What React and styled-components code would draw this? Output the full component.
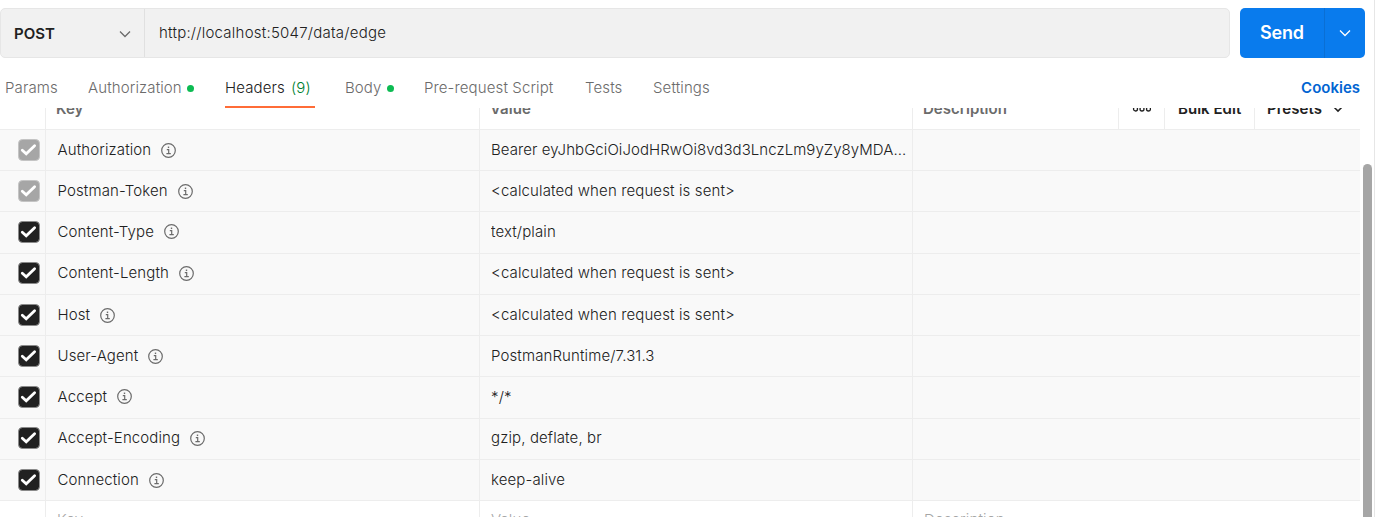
import React from "react";
import styled, { createGlobalStyle } from "styled-components";

const Global = createGlobalStyle`
  * { box-sizing: border-box; }
  body { margin: 0; background: #fff; overflow: hidden; }
`;

const Page = styled.div`
  width: 1375px;
  height: 517px;
  overflow: hidden;
  display: flex;
  flex-direction: column;
  border-right: 1px solid #e6e6e6;
  font: 350 15px/20px Inter, sans-serif;
  letter-spacing: 0.12px;
  color: #212121;
  white-space: nowrap;
`;

const UrlBar = styled.div`
  display: flex;
  gap: 10px;
  padding: 8px 9px 0 0;
`;

const UrlField = styled.div`
  flex: 1;
  display: flex;
  height: 50px;
  background: #f1f1f1;
  border: 1px solid #e6e6e6;
  border-radius: 5px;
`;

const Method = styled.div`
  width: 144px;
  display: flex;
  align-items: center;
  justify-content: space-between;
  padding: 2px 13px 0 13px;
  border-right: 1px solid #e0e0e0;
  font-weight: 600;
  letter-spacing: 0;
`;

const Url = styled.div`
  display: flex;
  align-items: center;
  padding-left: 14px;
  letter-spacing: 0.23px;
`;

const SendButton = styled.div`
  width: 125px;
  height: 50px;
  display: flex;
  border-radius: 5px;
  overflow: hidden;
  background: #097bed;
  color: #fff;
`;

const SendLabel = styled.div`
  width: 85px;
  display: flex;
  align-items: center;
  justify-content: center;
  border-right: 1px solid #0a6fd4;
  font-size: 18px;
  font-weight: 600;
  letter-spacing: -0.2px;
`;

const SendMenu = styled.div`
  flex: 1;
  display: flex;
  align-items: center;
  justify-content: center;
`;

const Tabs = styled.div`
  height: 50px;
  flex: none;
  display: flex;
  padding: 10px 14px 0 5px;
`;

const Tab = styled.div`
  width: ${(p) => p.$w}px;
  height: 40px;
  padding-top: 2px;
  margin-right: ${(p) => p.$gap}px;
  display: flex;
  align-items: center;
  color: ${(p) => (p.$active ? "#212121" : "#6b6b6b")};
  border-bottom: 2px solid ${(p) => (p.$active ? "#ff6c37" : "transparent")};
`;

const Count = styled.span`
  margin-left: 6px;
  color: #007f31;
`;

const Dot = styled.span`
  width: 7px;
  height: 7px;
  margin: 1px 0 0 5px;
  border-radius: 50%;
  background: #0cbb52;
`;

const Cookies = styled.div`
  margin-left: auto;
  height: 40px;
  display: flex;
  align-items: center;
  color: #0265d2;
  font-weight: 600;
  letter-spacing: 0;
`;

const Scroller = styled.div`
  flex: 1;
  min-height: 0;
  overflow: hidden;
  display: flex;
`;

const Table = styled.div`
  width: 1360px;
  margin-top: -20px;
`;

const Row = styled.div`
  display: grid;
  grid-template-columns: 46px 434px 433px 1fr;
  height: ${(p) => p.$h || 41}px;
  border-bottom: 1px solid #ededed;
  background: ${(p) => (p.$plain ? "#fff" : "#f9f9f9")};
`;

const HeadRow = styled(Row)`
  grid-template-columns: 46px 434px 433px 206px 46px 90px 1fr;
  height: 42px;
  background: #fff;
`;

const Cell = styled.div`
  display: flex;
  align-items: center;
  min-width: 0;
  padding: 0 0 ${(p) => p.$lift || 0}px 11px;
  border-right: 1px solid #ededed;
  color: ${(p) => (p.$faint ? "#a6a6a6" : "inherit")};
  &:last-child { border-right: 0; }
`;

const HeadCell = styled(Cell)`
  padding: 0 0 0 ${(p) => (p.$pad ?? 10)}px;
  color: ${(p) => (p.$action ? "#212121" : "#6b6b6b")};
  font-weight: 600;
  letter-spacing: 0.03px;
  gap: 11px;
`;

const CheckCell = styled(Cell)`
  padding-left: 18px;
`;

const KeyCell = styled(Cell)`
  padding-left: 11.5px;
  gap: 10px;
`;

const Value = styled.span`
  overflow: hidden;
  text-overflow: ellipsis;
  letter-spacing: ${(p) => (p.$tight ? 0.06 : 0.12)}px;
`;

const Scrollbar = styled.div`
  width: 9px;
  margin: 56px 0 0 3px;
  background: #a6a6a6;
  border-radius: 5px 5px 0 0;
`;

const Chevron = ({ color, size = 12, width = 1.3 }) => (
  <svg width={size} height={size} viewBox="0 0 12 12" fill="none" stroke={color} strokeWidth={width}>
    <path d="M1 3.5 6 8.5 11 3.5" />
  </svg>
);

const Check = ({ muted }) => (
  <svg width="22" height="22" viewBox="0 0 22 22" fill="none">
    <rect x="0.5" y="0.5" width="21" height="21" rx="4" fill={muted ? "#a6a6a6" : "#212121"} stroke={muted ? "#c4c4c4" : "#8a8a8a"} />
    <path d="M4.3 11.3 8.2 14.8 16.6 6.8" stroke="#fff" strokeWidth="2.8" strokeLinecap="round" />
  </svg>
);

const Info = () => (
  <svg width="15" height="15" viewBox="0 0 15 15" fill="none" stroke="#6b6b6b" strokeWidth="1.2">
    <circle cx="7.5" cy="7.5" r="6.8" />
    <path d="M5.8 6.6H7.7V10.7M5.4 10.7H9.8" />
    <path d="M6.8 4.3H8.2" strokeWidth="1.5" />
  </svg>
);

const More = () => (
  <svg width="19" height="6" viewBox="0 0 19 6" fill="none" stroke="#212121" strokeWidth="1.3">
    <circle cx="3.5" cy="3" r="2" />
    <circle cx="10" cy="3" r="2" />
    <circle cx="16.5" cy="3" r="2" />
  </svg>
);

const rows = [
  ["Authorization", "Bearer eyJhbGciOiJodHRwOi8vd3d3LnczLm9yZy8yMDA...", true],
  ["Postman-Token", "<calculated when request is sent>", true],
  ["Content-Type", "text/plain"],
  ["Content-Length", "<calculated when request is sent>"],
  ["Host", "<calculated when request is sent>"],
  ["User-Agent", "PostmanRuntime/7.31.3"],
  ["Accept", "*/*"],
  ["Accept-Encoding", "gzip, deflate, br"],
  ["Connection", "keep-alive"],
];

export default function App() {
  return (
    <>
      <Global />
      <Page>
        <UrlBar>
          <UrlField>
            <Method>POST<Chevron color="#6b6b6b" /></Method>
            <Url>http://localhost:5047/data/edge</Url>
          </UrlField>
          <SendButton>
            <SendLabel>Send</SendLabel>
            <SendMenu><Chevron color="#fff" /></SendMenu>
          </SendButton>
        </UrlBar>
        <Tabs>
          <Tab $w={53} $gap={30}>Params</Tab>
          <Tab $w={107} $gap={30}>Authorization<Dot /></Tab>
          <Tab $w={90} $gap={30} $active>Headers<Count>(9)</Count></Tab>
          <Tab $w={49} $gap={30}>Body<Dot /></Tab>
          <Tab $w={131} $gap={30}>Pre-request Script</Tab>
          <Tab $w={38} $gap={30}>Tests</Tab>
          <Tab $w={60} $gap={0}>Settings</Tab>
          <Cookies>Cookies</Cookies>
        </Tabs>
        <Scroller>
          <Table>
            <HeadRow>
              <HeadCell />
              <HeadCell>Key</HeadCell>
              <HeadCell>Value</HeadCell>
              <HeadCell>Description</HeadCell>
              <HeadCell $pad={13}><More /></HeadCell>
              <HeadCell $pad={13} $action>Bulk Edit</HeadCell>
              <HeadCell $pad={12} $action>Presets<Chevron color="#212121" size={10} width={1.8} /></HeadCell>
            </HeadRow>
            {rows.map(([key, value, muted], i) => {
              const lift = i % 4 > 1 ? 2 : 0;
              return (
                <Row key={key} $h={i % 4 === 2 ? 42 : 41}>
                  <CheckCell $lift={i % 4 === 2 ? 1 : lift}><Check muted={muted} /></CheckCell>
                  <KeyCell $lift={lift}>{key}<Info /></KeyCell>
                  <Cell $lift={lift}><Value $tight={i === 0}>{value}</Value></Cell>
                  <Cell />
                </Row>
              );
            })}
            <Row $plain>
              <Cell />
              <Cell $faint $lift={3}>Key</Cell>
              <Cell $faint $lift={3}>Value</Cell>
              <Cell $faint $lift={3}>Description</Cell>
            </Row>
          </Table>
          <Scrollbar />
        </Scroller>
      </Page>
    </>
  );
}
